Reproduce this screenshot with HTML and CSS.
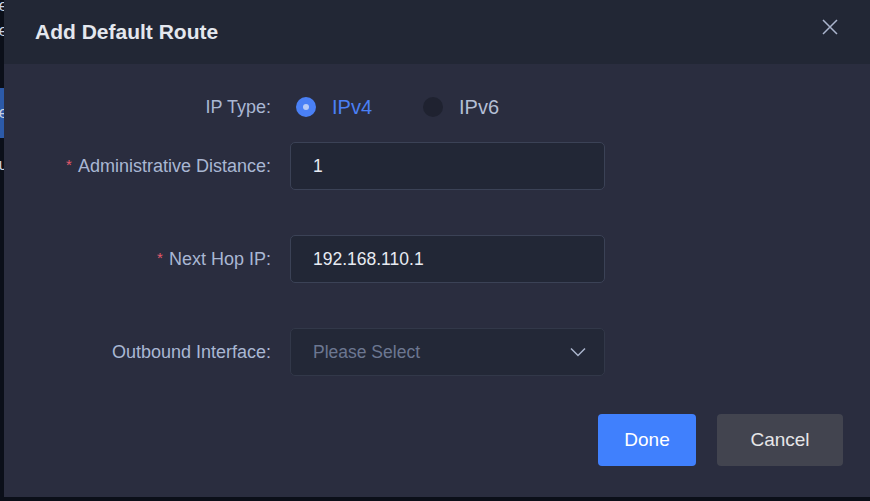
FILE: index.html
```html
<!DOCTYPE html>
<html lang="en">

<head>
    <meta charset="UTF-8">
    <meta name="viewport" content="width=device-width, initial-scale=1.0">
    <title>Default Route</title>
    <link rel="stylesheet" href="styles.css">
</head>

<body>
    <!-- page behind the dialog -->
    <div class="page">
        <div class="sidebar">
            <div class="menu-item">Route</div>
            <div class="menu-item">Interface</div>
            <div class="menu-item active">Static Route</div>
            <div class="menu-item">Menu</div>
        </div>
    </div>

    <div class="dialog">
        <div class="dialog-header">
            <span class="dialog-title">Add Default Route</span>
            <span class="dialog-close">
                <svg width="16" height="16" viewBox="0 0 16 16">
                    <path d="M1 1 L15 15 M15 1 L1 15" stroke="#aab4cc" stroke-width="1.5" fill="none" />
                </svg>
            </span>
        </div>

        <div class="dialog-body">
            <div class="form-item radio-row">
                <label class="form-label">IP Type:</label>
                <div class="radio-group">
                    <span class="radio checked"><span class="radio-dot"></span>IPv4</span>
                    <span class="radio"><span class="radio-dot"></span>IPv6</span>
                </div>
            </div>
            <div class="form-item">
                <label class="form-label"><span class="required">*</span>Administrative Distance:</label>
                <div class="input">1</div>
            </div>
            <div class="form-item">
                <label class="form-label"><span class="required">*</span>Next Hop IP:</label>
                <div class="input">192.168.110.1</div>
            </div>
            <div class="form-item">
                <label class="form-label">Outbound Interface:</label>
                <div class="input select">
                    <span class="placeholder">Please Select</span>
                    <svg width="16" height="10" viewBox="0 0 16 10">
                        <path d="M1 1.5 L8 8.5 L15 1.5" stroke="#aab4cc" stroke-width="1.5" fill="none" />
                    </svg>
                </div>
            </div>
        </div>

        <div class="dialog-footer">
            <button class="btn btn-primary">Done</button>
            <button class="btn btn-default">Cancel</button>
        </div>
    </div>
</body>

</html>
```

FILE: styles.css
```css
* {
    margin: 0;
    padding: 0;
    box-sizing: border-box;
}

body {
    width: 870px;
    height: 501px;
    overflow: hidden;
    background-color: #0b0f19;
    font-family: "Liberation Sans", Arial, sans-serif;
    position: relative;
}

.page {
    display: flex;
    height: 100%;
}

/* only a sliver of the menu shows left of the dialog */
.sidebar {
    width: 8px;
    overflow: hidden;
    color: #c8d0e0;
    font-size: 17px;
}

.menu-item {
    height: 26px;
    line-height: 26px;
    white-space: nowrap;
    display: flex;
    justify-content: flex-end;
}

.menu-item:first-child {
    height: 16px;
    line-height: 12px;
}

.menu-item:nth-child(2) {
    height: 72px;
    line-height: 30px;
}

.menu-item.active {
    height: 50px;
    line-height: 50px;
    background-color: #2c5aa8;
}

.menu-item:last-child {
    line-height: 54px;
}

.dialog {
    position: absolute;
    left: 4px;
    top: 0;
    width: 866px;
    height: 497px;
    background-color: #2a2d3f;
    display: flex;
    flex-direction: column;
}

.dialog-header {
    height: 64px;
    flex-shrink: 0;
    background-color: #222735;
    display: flex;
    align-items: center;
    justify-content: space-between;
    padding: 0 32px 0 31px;
}

.dialog-title {
    font-size: 21px;
    font-weight: bold;
    color: #e4e7ee;
}

.dialog-close {
    display: flex;
    margin-top: -10px;
}

.dialog-body {
    padding-top: 19px;
}

.form-item {
    display: flex;
    align-items: center;
    height: 48px;
    margin-bottom: 45px;
}

.form-item.radio-row {
    margin-bottom: 11px;
}

.form-item:last-child {
    margin-bottom: 38px;
}

.form-label {
    width: 267px;
    text-align: right;
    font-size: 18px;
    color: #a9b7d3;
    margin-right: 19px;
}

.required {
    color: #e45a6c;
    font-size: 15px;
    margin-right: 6px;
    position: relative;
    top: -2px;
}

.radio-group {
    display: flex;
    align-items: center;
    padding-left: 6px;
}

.radio {
    display: flex;
    align-items: center;
    font-size: 20px;
    color: #b4bed5;
    margin-right: 51px;
}

.radio-dot {
    width: 20px;
    height: 20px;
    border-radius: 50%;
    background-color: #1f2230;
    margin-right: 16px;
    display: flex;
    align-items: center;
    justify-content: center;
}

.radio.checked {
    color: #4a80f5;
}

.radio.checked .radio-dot {
    background-color: #4a80f5;
}

.radio.checked .radio-dot::after {
    content: "";
    width: 6px;
    height: 6px;
    border-radius: 50%;
    background-color: #b8cbf6;
}

.input {
    width: 315px;
    height: 48px;
    border: 1px solid #3b4256;
    border-radius: 5px;
    background-color: #222736;
    padding-left: 22px;
    display: flex;
    align-items: center;
    font-size: 17.5px;
    color: #e8ebf2;
}

.select {
    justify-content: space-between;
    padding-right: 18px;
    border-color: #323849;
    background-color: #232837;
}

.placeholder {
    color: #6c7791;
}

.dialog-footer {
    display: flex;
    justify-content: flex-end;
    padding: 0 27px 31px 0;
}

.btn {
    height: 52px;
    border: none;
    border-radius: 4px;
    font-family: "Liberation Sans", Arial, sans-serif;
    font-size: 19px;
}

.btn-primary {
    width: 98px;
    background-color: #4080fd;
    color: #ffffff;
    margin-right: 21px;
}

.btn-default {
    width: 126px;
    background-color: #42444f;
    color: #e6e6e8;
}
```
